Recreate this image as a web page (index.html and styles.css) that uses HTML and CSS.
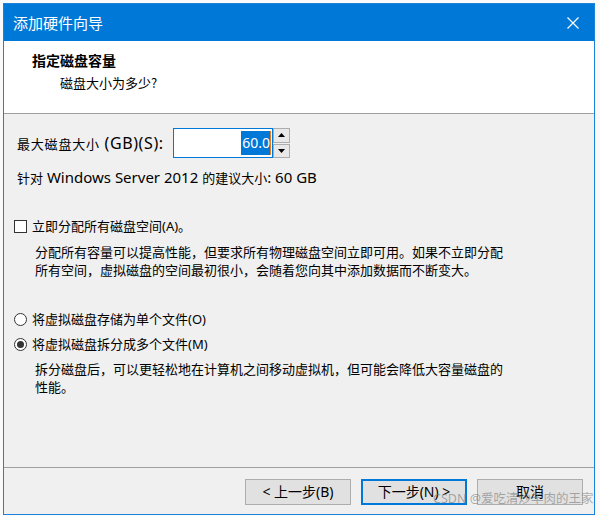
FILE: index.html
```html
<!DOCTYPE html>
<html lang="zh">
<head>
<meta charset="utf-8">
<link rel="stylesheet" href="styles.css">
</head>
<body>
<div class="stage">
  <div class="dialog">
    <div class="titlebar">
      <span class="title">添加硬件向导</span>
      <svg class="close" width="12" height="12" viewBox="0 0 12 12"><path d="M0.5 0.5L11.5 11.5M11.5 0.5L0.5 11.5" stroke="#fff" stroke-width="1.2" fill="none"/></svg>
    </div>
    <div class="header">
      <div class="h-title">指定磁盘容量</div>
      <div class="h-sub">磁盘大小为多少?</div>
    </div>
    <div class="content">
      <div class="size-row">
        <span class="size-label">最大磁盘大小<span class="lat"> (GB)(S):</span></span>
        <div class="input"><span class="sel">60.0</span><span class="caret"></span></div>
        <div class="spin">
          <div class="spin-btn"><svg width="7" height="4" viewBox="0 0 7 4"><path d="M3.5 0L7 4H0Z" fill="#000"/></svg></div>
          <div class="spin-btn"><svg width="7" height="4" viewBox="0 0 7 4"><path d="M0 0H7L3.5 4Z" fill="#000"/></svg></div>
        </div>
      </div>
      <div class="recommend">针对<span class="lat"> Windows Server 2012 </span>的建议大小<span class="lat">: 60 GB</span></div>
      <div class="check-row"><span class="checkbox"></span><span>立即分配所有磁盘空间(A)。</span></div>
      <p class="desc desc1">分配所有容量可以提高性能，但要求所有物理磁盘空间立即可用。如果不立即分配<br>所有空间，虚拟磁盘的空间最初很小，会随着您向其中添加数据而不断变大。</p>
      <div class="radio-row r1"><span class="radio"></span><span>将虚拟磁盘存储为单个文件(O)</span></div>
      <div class="radio-row r2"><span class="radio on"></span><span>将虚拟磁盘拆分成多个文件(M)</span></div>
      <p class="desc desc2">拆分磁盘后，可以更轻松地在计算机之间移动虚拟机，但可能会降低大容量磁盘的<br>性能。</p>
    </div>
    <div class="footer">
      <button class="btn">&lt; 上一步(B)</button>
      <button class="btn focus">下一步(N) &gt;</button>
      <button class="btn">取消</button>
    </div>
  </div>
  <div class="watermark">CSDN @爱吃清炒羊肉的王家</div>
</div>
</body>
</html>
```
FILE: styles.css
```css
* { box-sizing: border-box; }
html, body { margin: 0; padding: 0; }
body {
  width: 600px;
  height: 516px;
  overflow: hidden;
  background: #fafafa;
  font-family: "Noto Sans", "Noto Sans CJK SC", sans-serif;
  font-size: 13px;
  color: #000;
}
.stage {
  position: relative;
  padding: 3px 0 0 3px;
  width: 600px;
  height: 516px;
}
.dialog {
  width: 592px;
  height: 512px;
  border: 1px solid #1a82d8;
  display: flex;
  flex-direction: column;
  background: #f0f0f0;
}
.titlebar {
  height: 37px;
  background: #0078d7;
  display: flex;
  align-items: center;
  justify-content: space-between;
  padding: 0 15px 0 9px;
  flex: none;
}
.title {
  color: #fff;
  font-family: "Noto Sans CJK SC", sans-serif;
  font-size: 15px;
  line-height: 20px;
  margin-top: 1px;
}
.close { display: block; margin-top: 1px; }
.header {
  background: #fff;
  height: 73px;
  border-bottom: 1px solid #a0a0a0;
  padding: 10px 0 0 28px;
  flex: none;
  font-family: "Noto Sans CJK SC", sans-serif;
}
.h-title {
  font-weight: 700;
  font-size: 14px;
  line-height: 18px;
}
.h-sub {
  margin-top: 5px;
  padding-left: 28px;
  line-height: 18px;
}
.content {
  flex: 1;
  padding: 14px 0 0 10px;
  border-bottom: 1px solid #a0a0a0;
}
.lat { font-size: 15px; }
.size-row {
  display: flex;
  align-items: center;
  height: 30px;
  padding-left: 3px;
}
.size-label {
  width: 156px;
  line-height: 18px;
  white-space: nowrap;
  letter-spacing: 0.8px;
}
.size-label .lat { font-size: 16px; letter-spacing: 0.6px; }
.input {
  width: 100px;
  height: 30px;
  border: 1px solid #0078d7;
  background: #fff;
  display: flex;
  align-items: center;
  justify-content: flex-end;
  padding-right: 1px;
}
.sel {
  background: #0078d7;
  color: #fff;
  font-size: 14px;
  line-height: 24px;
  padding: 0 0 0 1px;
}
.caret {
  width: 1px;
  height: 24px;
  background: #f07b1c;
}
.spin {
  width: 17px;
  height: 30px;
  display: flex;
  flex-direction: column;
  gap: 1px;
}
.spin-btn {
  flex: 1;
  border: 1px solid #adadad;
  background: #e8e8e8;
  display: flex;
  align-items: center;
  justify-content: center;
}
.recommend {
  margin-top: 10px;
  padding-left: 3px;
  line-height: 18px;
  white-space: nowrap;
}
.check-row, .radio-row {
  display: flex;
  align-items: center;
  gap: 5px;
  line-height: 18px;
}
.check-row { margin-top: 30px; }
.checkbox {
  width: 13px;
  height: 13px;
  border: 1px solid #333;
  background: #fff;
}
.desc {
  margin: 8px 0 0 21px;
  line-height: 18px;
  font-family: "Noto Sans CJK SC", sans-serif;
}
.desc1 { margin-top: 8px; }
.r1 { margin-top: 31px; }
.r2 { margin-top: 7px; }
.desc2 { margin-top: 7px; }
.radio {
  width: 13px;
  height: 13px;
  border: 1px solid #333;
  border-radius: 50%;
  background: #fff;
  display: flex;
  align-items: center;
  justify-content: center;
}
.radio.on::after {
  content: "";
  width: 7px;
  height: 7px;
  border-radius: 50%;
  background: #333;
}
.footer {
  height: 46px;
  flex: none;
  display: flex;
  justify-content: flex-end;
  align-items: flex-start;
  gap: 10px;
  padding: 11px 11px 0 0;
}
.btn {
  width: 106px;
  height: 26px;
  border: 1px solid #adadad;
  background: #e1e1e1;
  font-family: "Noto Sans", "Noto Sans CJK SC", sans-serif;
  font-size: 14px;
  color: #000;
  padding: 0;
  line-height: 22px;
}
.btn.focus { border: 2px solid #0078d7; }
.watermark {
  position: absolute;
  left: 433px;
  top: 490px;
  font-size: 12.5px;
  line-height: 18px;
  color: rgba(120, 120, 120, 0.6);
  white-space: nowrap;
}
```
